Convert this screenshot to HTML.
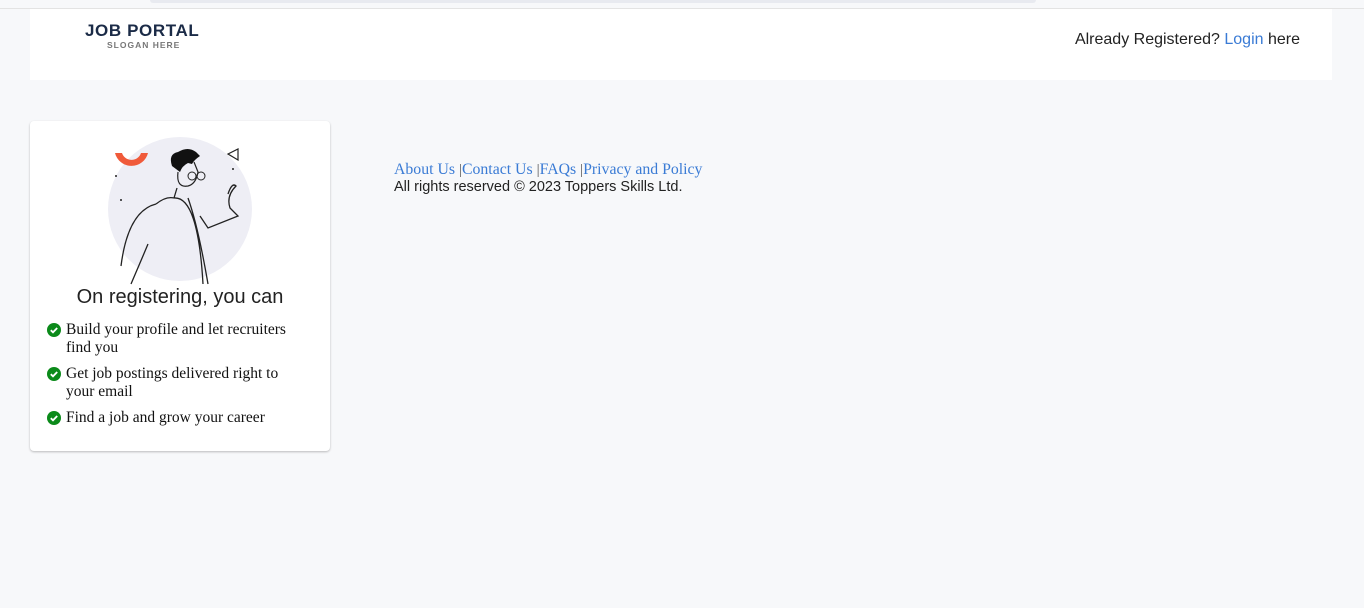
<!DOCTYPE html>
<html><head><meta charset="utf-8"><style>
*{margin:0;padding:0;box-sizing:border-box}
body{width:1364px;height:608px;background:#f7f8fa;font-family:"Liberation Sans",sans-serif;position:relative;overflow:hidden}
.topstrip{position:absolute;left:0;top:0;width:1364px;height:9px;background:#f7f8fa;border-bottom:1px solid #e3e3e3}
.topbar{position:absolute;left:150px;top:0;width:886px;height:3px;background:#e8eaf0;border-radius:0 0 6px 6px}
.header{position:absolute;left:30px;top:9px;width:1302px;height:71px;background:#fff}
.logo1{position:absolute;left:55px;top:12px;font-weight:bold;font-size:17px;color:#1b2b47;letter-spacing:0.6px}
.logo2{position:absolute;left:77px;top:31px;font-weight:bold;font-size:8.5px;color:#777;letter-spacing:1px}
.login{position:absolute;right:32px;top:21px;font-size:16px;color:#222}
.login span{color:#3a7bd5}
.card{position:absolute;left:30px;top:121px;width:300px;height:330px;background:#fff;border-radius:4px;box-shadow:0 1px 2px rgba(0,0,0,.25)}
.card h3{position:absolute;left:0;width:300px;top:165px;text-align:center;font-weight:normal;font-size:20px;color:#222}
ul{position:absolute;left:17px;top:200px;list-style:none;font-family:"Liberation Serif",serif;font-size:15.5px;color:#111;line-height:18px}
li{position:relative;padding-left:19px;margin-bottom:8px;width:262px}
li svg{position:absolute;left:0;top:2px}
.foot{position:absolute;left:394px;top:161px}
.links{font-family:"Liberation Serif",serif;font-size:15.8px;color:#3a7bd5}
.links i{font-style:normal;color:#555;font-size:15px}
.rights{font-size:14.5px;color:#222;margin-top:0}
</style></head><body>
<div class="topstrip"></div><div class="topbar"></div>
<div class="header">
<div class="logo1">JOB PORTAL</div><div class="logo2">SLOGAN HERE</div>
<div class="login" style="top:22px">Already Registered? <span>Login</span> here</div>
</div>
<div class="card">
<svg style="position:absolute;left:78px;top:15px" width="150" height="150" viewBox="0 0 150 150">
<circle cx="72" cy="73" r="72" fill="#eeeef5"/>
<path d="M7 17 A17 17 0 0 0 40 17 L33 17 A10 10 0 0 1 14 17 Z" fill="#f05a3a"/>
<path d="M120 18 L130 13 L130 24 Z" fill="none" stroke="#222" stroke-width="1.2"/>
<circle cx="8" cy="40" r="1" fill="#222"/><circle cx="13" cy="64" r="1" fill="#222"/><circle cx="125" cy="33" r="1" fill="#222"/>
<path d="M64 30 Q60 18 70 16 Q80 10 88 16 L92 20 Q86 24 84 28 L80 27 Q74 30 72 36 Z" fill="#111"/>
<path d="M70 36 Q68 52 80 50 Q88 48 90 36 L86 26" fill="none" stroke="#222" stroke-width="1.2"/>
<circle cx="84" cy="40" r="4" fill="none" stroke="#222"/><circle cx="93" cy="40" r="4" fill="none" stroke="#222"/>
<path d="M69 52 L66 62 M48 68 Q20 75 13 130 M23 148 Q35 120 40 108 M66 62 Q90 60 95 148 M80 62 Q90 90 100 148 M92 80 L100 92 L130 80 L122 72 Q118 60 128 50 Q124 46 120 58" fill="none" stroke="#222" stroke-width="1.3"/>
<path d="M48 68 Q58 60 66 62" fill="none" stroke="#222" stroke-width="1.3"/>
</svg>
<h3>On registering, you can</h3>
<ul>
<li><svg width="14" height="14" viewBox="0 0 14 14"><circle cx="7" cy="7" r="7" fill="#0b8a1a"/><path d="M3.8 7.2 L6 9.3 L10.2 5" stroke="#fff" stroke-width="1.8" fill="none"/></svg>Build your profile and let recruiters find you</li>
<li><svg width="14" height="14" viewBox="0 0 14 14"><circle cx="7" cy="7" r="7" fill="#0b8a1a"/><path d="M3.8 7.2 L6 9.3 L10.2 5" stroke="#fff" stroke-width="1.8" fill="none"/></svg>Get job postings delivered right to your email</li>
<li><svg width="14" height="14" viewBox="0 0 14 14"><circle cx="7" cy="7" r="7" fill="#0b8a1a"/><path d="M3.8 7.2 L6 9.3 L10.2 5" stroke="#fff" stroke-width="1.8" fill="none"/></svg>Find a job and grow your career</li>
</ul>
</div>
<div class="foot">
<div class="links">About Us <i>|</i>Contact Us <i>|</i>FAQs <i>|</i>Privacy and Policy</div>
<div class="rights">All rights reserved © 2023 Toppers Skills Ltd.</div>
</div>
</body></html>
